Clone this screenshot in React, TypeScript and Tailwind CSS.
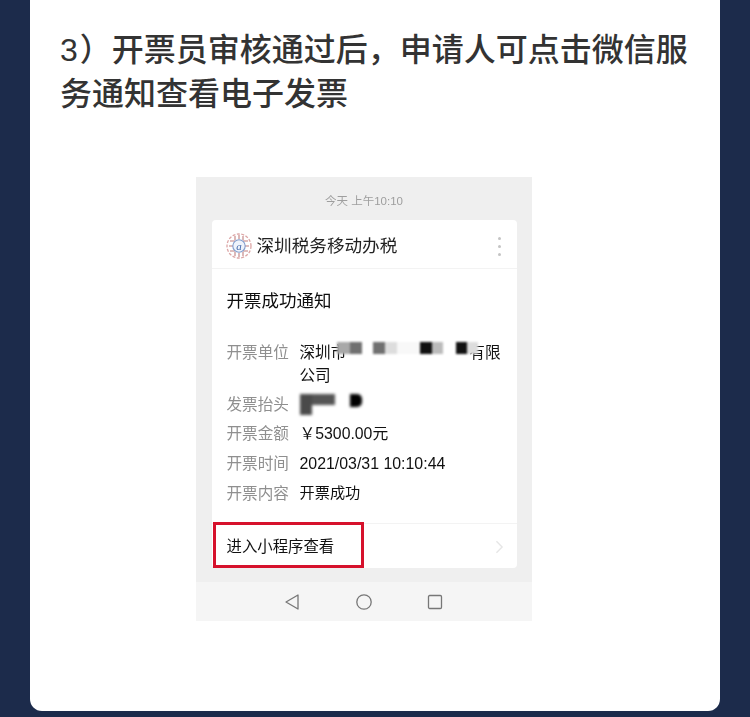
const cjk = "font-['Liberation_Sans','Noto_Sans_CJK_SC',sans-serif]";

const rows = [
  { label: "发票抬头", value: "", mask: true, cls: "h-[29px]", valueCls: "" },
  { label: "开票金额", value: "￥5300.00元", mask: false, cls: "h-[30px]", valueCls: "text-[15.8px]" },
  { label: "开票时间", value: "2021/03/31 10:10:44", mask: false, cls: "h-[30px]", valueCls: "text-[15.9px]" },
  { label: "开票内容", value: "开票成功", mask: false, cls: "h-[29px]", valueCls: "text-[15.2px]" },
];

const companyCells = [
  "w-[13px] h-[12px] bg-[#a8a8a8]",
  "w-[12px] h-[12px] bg-[#707070]",
  "w-[11px] h-[12px] bg-[#ffffff]",
  "w-[12px] h-[12px] bg-[#707070]",
  "w-[12px] h-[12px] bg-[#dddddd]",
  "w-[23px] h-[12px] bg-[#f8f8f8]",
  "w-[12px] h-[12px] bg-[#111111]",
  "w-[11px] h-[12px] bg-[#bbbbbb]",
  "w-[13px] h-[12px] bg-[#ffffff]",
  "w-[11px] h-[12px] bg-[#111111]",
  "w-[11px] h-[12px] bg-[#dddddd]",
];

function TaxLogo() {
  return (
    <svg viewBox="0 0 26 26" className="w-[26px] h-[26px] shrink-0" fill="none">
      <circle cx="13" cy="13" r="12" stroke="#dca5a5" strokeWidth="1.3" strokeDasharray="3 1.5" />
      <path d="M4 8h5M3 13h4M4 18h5M17 8h5M19 13h4M17 18h5M9 3v4M13 2v4M17 3v4M9 19v4M13 20v4M17 19v4" stroke="#c07f7f" strokeWidth="1.1" />
      <circle cx="13" cy="13" r="6.2" fill="#eef3fb" stroke="#7f9bcb" strokeWidth="1.1" />
      <text x="13" y="16.5" textAnchor="middle" fontSize="11" fontStyle="italic" fill="#3f66aa" fontFamily="Liberation Serif, serif">a</text>
    </svg>
  );
}

function NotificationShot() {
  return (
    <div className={`w-[336px] h-[444px] bg-[#efefef] flex flex-col items-center blur-[0.4px] ${cjk}`}>
      <div className="h-[43px] w-full flex items-center justify-center pt-[7px] text-[11.5px] text-[#9e9e9e]">
        今天 上午10:10
      </div>
      <div className="relative w-[305px] h-[348px] bg-white rounded-[4px] flex flex-col">
        <div className="h-[49px] shrink-0 flex items-center pt-[4px] pl-[14px] pr-[16px] border-b border-[#f3f3f3]">
          <TaxLogo />
          <span className="ml-[5px] text-[17.6px] text-[#222222]">深圳税务移动办税</span>
          <div className="ml-auto flex flex-col gap-[5px]">
            <span className="w-[3px] h-[3px] rounded-full bg-[#c4c4c4]" />
            <span className="w-[3px] h-[3px] rounded-full bg-[#c4c4c4]" />
            <span className="w-[3px] h-[3px] rounded-full bg-[#c4c4c4]" />
          </div>
        </div>
        <div className="flex-1 pl-[15px] pr-[15px]">
          <div className="h-[63px] flex items-center pt-[2px] text-[17.5px] text-[#0d0d0d]">开票成功通知</div>
          <div className="relative flex text-[15.6px] leading-[23px] pt-[9px]">
            <span className="w-[73px] shrink-0 text-[#8f8f8f]">开票单位</span>
            <div className="w-[201px] text-[#111111]">
              <div className="flex justify-between">
                <span>深圳市</span>
                <span>有限</span>
              </div>
              <div>公司</div>
            </div>
            <div className="absolute left-[110px] top-[10px] flex blur-[0.8px]">
              {companyCells.map((c, i) => (
                <span key={i} className={c} />
              ))}
            </div>
          </div>
          <div className="mt-[3px]">
            {rows.map((r) => (
              <div key={r.label} className={`flex items-center text-[15.6px] ${r.cls}`}>
                <span className="w-[73px] shrink-0 text-[#8f8f8f]">{r.label}</span>
                {r.mask ? (
                  <div className="flex h-[21px] w-[62px] blur-[1.5px] bg-white">
                    <span className="w-[12px] h-[21px] bg-[#4a4a4a]" />
                    <span className="w-[23px] h-[11px] bg-[#555555]" />
                    <span className="w-[15px] h-[11px] bg-white" />
                    <span className="w-[12px] h-[13px] bg-black rounded-r-[5px]" />
                  </div>
                ) : (
                  <span className={`text-[#111111] ${r.valueCls}`}>{r.value}</span>
                )}
              </div>
            ))}
          </div>
        </div>
        <div className="h-[45px] shrink-0 flex items-center justify-between pt-[1px] pl-[15px] pr-[13px] border-t border-[#f3f3f3] text-[15.4px] text-[#111111]">
          <span>进入小程序查看</span>
          <svg viewBox="0 0 10 16" className="w-[9px] h-[14px]" fill="none" stroke="#e6e6e6" strokeWidth="1.6">
            <path d="M1.5 1.5 8 8l-6.5 6.5" />
          </svg>
        </div>
        <div className="absolute left-[1px] bottom-0 w-[151px] h-[46px] border-[3px] border-[#d6112c]" />
      </div>
      <div className="mt-[14px] h-[39px] w-full bg-[#f5f5f5] flex items-center pl-[88px] gap-[51px]">
        <svg viewBox="0 0 16 18" className="w-[16px] h-[18px]" fill="none" stroke="#777777" strokeWidth="1.3">
          <path d="M14 2v14L2 9z" strokeLinejoin="round" />
        </svg>
        <svg viewBox="0 0 18 18" className="w-[18px] h-[18px] ml-[4px]" fill="none" stroke="#777777" strokeWidth="1.3">
          <circle cx="9" cy="9" r="7.2" />
        </svg>
        <svg viewBox="0 0 16 16" className="w-[16px] h-[16px] ml-[3px]" fill="none" stroke="#777777" strokeWidth="1.3">
          <rect x="1.5" y="1.5" width="13" height="13" rx="1.2" />
        </svg>
      </div>
    </div>
  );
}

export default function App() {
  return (
    <main className="h-[717px] w-[750px] overflow-hidden bg-[#1c2b4b]">
      <div className="mx-[30px] h-[711px] bg-white rounded-b-[12px] flex flex-col">
        <h1 className={`pl-[30px] pt-[28px] text-[32px] leading-[44px] font-medium text-[#333333] ${cjk}`}>
          <span className="mr-[2px]">3</span>）开票员审核通过后，申请人可点击微信服
          <br />
          务通知查看电子发票
        </h1>
        <div className="mt-[61px] ml-[166px]">
          <NotificationShot />
        </div>
      </div>
    </main>
  );
}
